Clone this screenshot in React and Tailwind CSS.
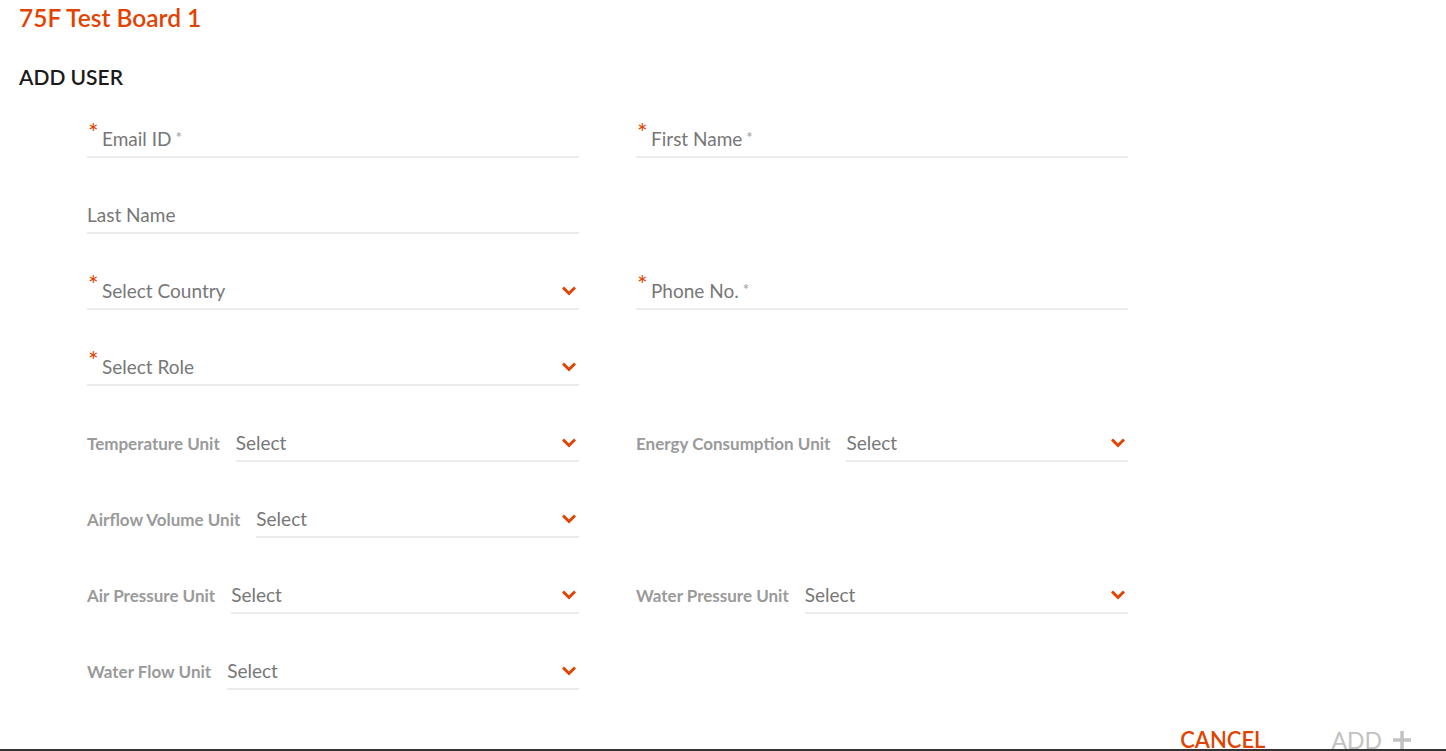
import React from "react";

const font = { fontFamily: "Lato, 'Open Sans', sans-serif" };

const Chevron = () => (
  <svg width="14" height="10" viewBox="0 0 14 10" className="shrink-0">
    <path d="M2 2.5 L7 7.5 L12 2.5" fill="none" stroke="#e24301" strokeWidth="3" strokeLinecap="square" />
  </svg>
);

const Field = ({ label, required, select }) => (
  <div className="relative flex h-[40px] items-center border-b-2 border-[#ebebeb] pr-[3px] pt-[4px]">
    {required && (
      <span className="absolute left-[1px] top-[2px] text-[25px] leading-6 text-[#e24301]">*</span>
    )}
    <span className={`flex-1 text-[19px] text-[#777] ${required ? "pl-[15px]" : ""}`}>
      {label}
      {required && !select && (
        <span className="relative top-[-3px] ml-[4px] text-[15px] text-[#999]">*</span>
      )}
    </span>
    {select && <Chevron />}
  </div>
);

const UnitField = ({ label }) => (
  <div className="flex h-[40px] items-center">
    <span className="pt-[4px] text-[17px] font-bold text-[#9a9a9a]">{label}</span>
    <div className="ml-4 flex h-full flex-1 items-center border-b-2 border-[#ebebeb] pr-[3px] pt-[4px]">
      <span className="flex-1 text-[19px] text-[#777]">Select</span>
      <Chevron />
    </div>
  </div>
);

export default function App() {
  const rows = [
    [<Field label="Email ID" required />, <Field label="First Name" required />],
    [<Field label="Last Name" />, null],
    [<Field label="Select Country" required select />, <Field label="Phone No." required />],
    [<Field label="Select Role" required select />, null],
    [<UnitField label="Temperature Unit" />, <UnitField label="Energy Consumption Unit" />],
    [<UnitField label="Airflow Volume Unit" />, null],
    [<UnitField label="Air Pressure Unit" />, <UnitField label="Water Pressure Unit" />],
    [<UnitField label="Water Flow Unit" />, null],
  ];

  return (
    <div className="relative h-[751px] overflow-hidden bg-white" style={font}>
      <div className="px-[19px] pt-[2px]">
        <h1 className="text-[24.5px] font-semibold leading-8 text-[#e24301]">75F Test Board 1</h1>
        <h2 className="mt-[29px] text-[21px] font-semibold leading-7 text-[#1a1a1a]">ADD USER</h2>
      </div>

      <div className="mt-[27px] flex flex-col gap-[36px] pl-[87px]">
        {rows.map((r, i) => (
          <div key={i} className="grid grid-cols-[492px_492px] gap-x-[57px]">
            <div>{r[0]}</div>
            <div>{r[1]}</div>
          </div>
        ))}
      </div>

      <div className="mt-[36px] flex justify-end gap-[66px] pr-[34px]">
        <button className="text-[22px] font-semibold leading-7 text-[#e24301]">CANCEL</button>
        <button className="flex items-center gap-[10px] text-[23px] leading-7 text-[#c2c2c2]">
          ADD
          <svg width="20" height="20" viewBox="0 0 20 20">
            <path d="M10 1 V19 M1 10 H19" stroke="#c2c2c2" strokeWidth="3.5" />
          </svg>
        </button>
      </div>

      <div className="absolute bottom-0 left-0 h-[2px] w-full bg-[#333]" />
    </div>
  );
}
